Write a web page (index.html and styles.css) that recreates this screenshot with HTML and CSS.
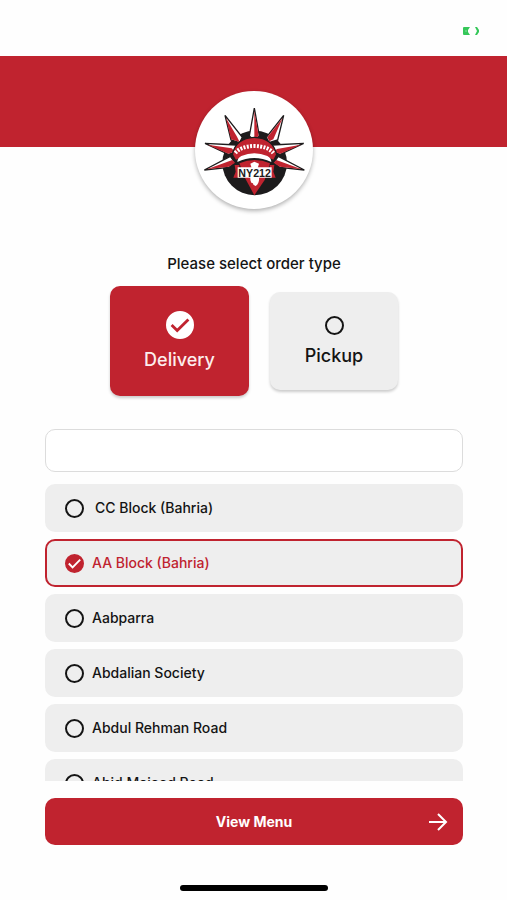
FILE: index.html
```
<!DOCTYPE html>
<html lang="en">
<head>
<meta charset="UTF-8">
<meta name="viewport" content="width=device-width, initial-scale=1">
<title>NY212</title>
<link rel="stylesheet" href="styles.css">
</head>
<body>
  <div class="status">
    <!-- battery -->
    <svg class="battery" viewBox="0 0 16 8" aria-hidden="true">
      <path d="M1 0h6L5 3v2l2 3H1Q0 8 0 7V1Q0 0 1 0z" fill="#35c759"/>
      <path d="M2 3h2v2H2z" fill="#5fd27c"/>
      <path d="M12 0h2l2 3v2l-2 3h-2l2-4z" fill="#35c759"/>
    </svg>
  </div>
  <header class="banner"></header>

  <main class="content">
    <div class="logo">
      <svg viewBox="30 33 354 354" role="img" aria-label="NY212">
        <circle cx="209" cy="249" r="97" fill="#1d1b1c"/>
        <!-- crown spikes -->
        <g fill="#fff" stroke="#1d1b1c" stroke-width="4" stroke-linejoin="miter">
          <path d="M208 84l-15 84 15 14 15-14z"/>
          <path d="M120 106l18 74 26 8 8-16z"/>
          <path d="M296 106l-18 74-26 8-8-16z"/>
          <path d="M60 190l70 33 20-6 4-22z"/>
          <path d="M356 190l-70 33-20-6-4-22z"/>
          <path d="M58 270l74-8 18-14-14-19z"/>
          <path d="M358 270l-74-8-18-14 14-19z"/>
        </g>
        <g fill="#c0232f">
          <path d="M208 92v88l13-13z"/>
          <path d="M123 114l15 64 26 8-8-16z"/>
          <path d="M293 114l-46 58 6 12 12-6z"/>
          <path d="M68 194l62 27 20-6-10-10z"/>
          <path d="M348 194l-62 27-20-6 10-8z"/>
          <path d="M66 268l66-8 18-12-8-8z"/>
          <path d="M350 268l-66-8-18-12 8-8z"/>
        </g>
        <!-- crown -->
        <path d="M142 224q10-50 66-52 56 2 67 52l-9 18q-58-30-114 0z" fill="#c0232f" stroke="#1d1b1c" stroke-width="4"/>
        <path d="M151 219q16-20 57-21 41 1 57 21" fill="none" stroke="#fff" stroke-width="12" stroke-dasharray="6 4"/>
        <path d="M157 246q0-12 12-18 39-16 78 0 12 6 12 18-52-24-102 0z" fill="#fff"/>
        <!-- face -->
        <path d="M163 250q46-20 92 0l-16 50-31 46-28-52z" fill="#c0232f"/>
        <path d="M196 251l12-6 14 6-4 14h-18z" fill="#fff"/>
        <path d="M196 292q14-6 26 0 2 18-10 26-18-6-16-26z" fill="#fff"/>
        <path d="M204 310l6 34-18-36z" fill="#c0232f"/>
        <!-- ribbon -->
        <path d="M149 255h14v38h-18l7-18z" fill="#c0232f"/>
        <path d="M268 255h-14v38h18l-7-18z" fill="#c0232f"/>
        <path d="M158 262h102v31H158z" fill="#fff"/>
        <text class="logo-text" x="209" y="290" text-anchor="middle">NY212</text>
      </svg>
    </div>

    <form class="order">
      <fieldset class="types">
        <legend>Please select order type</legend>
        <div class="type-row">
          <label class="type">
            <span class="radio">
              <input type="radio" name="type" value="delivery" checked>
              <svg viewBox="0 0 20 20" aria-hidden="true"><path d="M4 10l4 4 8-8"/></svg>
            </span>
            Delivery
          </label>
          <label class="type">
            <span class="radio">
              <input type="radio" name="type" value="pickup">
              <svg viewBox="0 0 20 20" aria-hidden="true"><path d="M4 10l4 4 8-8"/></svg>
            </span>
            Pickup
          </label>
        </div>
      </fieldset>

      <input class="search" type="text" aria-label="Search area">

      <div class="areas">
        <label class="area">
          <span class="radio">
            <input type="radio" name="area">
            <svg viewBox="0 0 20 20" aria-hidden="true"><path d="M4 10l4 4 8-8"/></svg>
          </span>
          CC Block (Bahria)
        </label>
        <label class="area">
          <span class="radio">
            <input type="radio" name="area" checked>
            <svg viewBox="0 0 20 20" aria-hidden="true"><path d="M4 10l4 4 8-8"/></svg>
          </span>
          AA Block (Bahria)
        </label>
        <label class="area">
          <span class="radio">
            <input type="radio" name="area">
            <svg viewBox="0 0 20 20" aria-hidden="true"><path d="M4 10l4 4 8-8"/></svg>
          </span>
          Aabparra
        </label>
        <label class="area">
          <span class="radio">
            <input type="radio" name="area">
            <svg viewBox="0 0 20 20" aria-hidden="true"><path d="M4 10l4 4 8-8"/></svg>
          </span>
          Abdalian Society
        </label>
        <label class="area">
          <span class="radio">
            <input type="radio" name="area">
            <svg viewBox="0 0 20 20" aria-hidden="true"><path d="M4 10l4 4 8-8"/></svg>
          </span>
          Abdul Rehman Road
        </label>
        <label class="area">
          <span class="radio">
            <input type="radio" name="area">
            <svg viewBox="0 0 20 20" aria-hidden="true"><path d="M4 10l4 4 8-8"/></svg>
          </span>
          Abid Majeed Road
        </label>
      </div>

      <button class="view-menu" type="submit">
        <span>View Menu</span>
        <svg viewBox="0 0 20 20" aria-hidden="true"><path d="M1 10h17M10 2l8 8-8 8"/></svg>
      </button>
    </form>
  </main>

  <div class="home-bar"></div>
</body>
</html>
```
FILE: styles.css
```
* {
  box-sizing: border-box;
}

body {
  margin: 0;
  height: 100vh;
  display: flex;
  flex-direction: column;
  background: #fefefe;
  color: #141414;
  font-family: Inter, "Open Sans", sans-serif;
  font-weight: 500;
}

.status {
  flex: none;
  height: 56px;
  padding: 27px 28px 0;
  display: flex;
  justify-content: flex-end;
}

.battery {
  width: 16px;
  height: 8px;
}

.banner {
  flex: none;
  height: 91px;
  background: #c0232f;
}

.content {
  flex: 1;
  min-height: 0;
  margin-top: -56px;
  padding: 0 44px 0 45px;
  display: flex;
  flex-direction: column;
}

.logo {
  flex: none;
  align-self: center;
  width: 118px;
  height: 118px;
  border-radius: 50%;
  background: #fff;
  box-shadow: 0 2px 4px rgba(0, 0, 0, 0.3);
}

.logo svg {
  display: block;
}

.logo-text {
  font: bold 32px "Liberation Sans", sans-serif;
  fill: #1d1b1c;
}

.order {
  flex: 1;
  min-height: 0;
  margin-top: 45px;
  display: flex;
  flex-direction: column;
}

.types {
  margin: 0;
  padding: 0;
  border: 0;
}

.types legend {
  margin: 0 auto;
  padding: 0;
  font-size: 15px;
  line-height: 20px;
}

.type-row {
  display: flex;
  justify-content: center;
  align-items: center;
  gap: 21px;
  height: 110px;
  margin-top: 12px;
}

.type {
  display: flex;
  flex-direction: column;
  align-items: center;
  justify-content: center;
  gap: 10px;
  width: 128px;
  height: 98px;
  border-radius: 10px;
  background: #eee;
  box-shadow: 0 2px 3px rgba(0, 0, 0, 0.2);
  font-size: 18px;
  line-height: 22px;
}

.type:has(:checked) {
  width: 139px;
  height: 110px;
  background: #c0232f;
  color: #fceeee;
}

/* the tick lies in the same cell as the circle */
.radio {
  display: grid;
  place-items: center;
}

.radio input,
.radio svg {
  grid-area: 1 / 1;
}

.radio input {
  appearance: none;
  width: 19px;
  height: 19px;
  margin: 0;
  border: 2px solid #141414;
  border-radius: 50%;
}

.radio svg {
  display: none;
  width: 19px;
  height: 19px;
  fill: none;
  stroke: #fff;
  stroke-width: 2;
  pointer-events: none;
}

.radio input:checked {
  border-color: #c0232f;
  background: #c0232f;
}

.radio input:checked + svg {
  display: block;
}

.type .radio input:checked {
  width: 28px;
  height: 28px;
  border-color: #fff;
  background: #fff;
}

.type .radio svg {
  width: 28px;
  height: 28px;
  stroke: #c0232f;
}

.search {
  flex: none;
  width: 100%;
  height: 43px;
  margin: 33px 0 12px;
  padding: 0 14px;
  border: 1px solid #dcdcdc;
  border-radius: 10px;
  background: #fff;
  font: inherit;
  font-size: 14px;
}

.areas {
  flex: 1;
  min-height: 0;
  display: flex;
  flex-direction: column;
  gap: 7px;
  overflow-y: auto;
  scrollbar-width: none;
}

.area {
  flex: none;
  display: flex;
  align-items: center;
  gap: 8px;
  height: 48px;
  padding: 0 18px;
  border: 2px solid #eee;
  border-radius: 10px;
  background: #eee;
  font-size: 14px;
  line-height: 20px;
}

.area:first-child {
  gap: 11px;
}

.area:has(:checked) {
  border-color: #c0232f;
  color: #c0232f;
}

.view-menu {
  flex: none;
  display: grid;
  grid-template-columns: 1fr auto 1fr;
  align-items: center;
  height: 47px;
  margin: 17px 0 0;
  padding: 0 15px;
  border: 0;
  border-radius: 10px;
  background: #c0232f;
  color: #fff;
  font: inherit;
  font-size: 14px;
  font-weight: 700;
}

.view-menu span {
  grid-column: 2;
}

.view-menu svg {
  justify-self: end;
  width: 20px;
  height: 20px;
  fill: none;
  stroke: #fff;
  stroke-width: 2;
}

.home-bar {
  flex: none;
  align-self: center;
  width: 148px;
  height: 6px;
  margin: 40px 0 9px;
  border-radius: 3px;
  background: #000;
}
```
